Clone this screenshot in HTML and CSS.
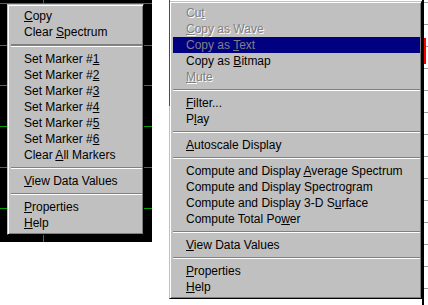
FILE: index.html
```html
<!DOCTYPE html>
<html lang="en">
<head>
    <meta charset="UTF-8">
    <title>Context Menus</title>
    <link rel="stylesheet" href="styles.css">
</head>
<body>
    <div class="scope">
        <ul class="menu menu--left">
            <li class="menu__item"><u>C</u>opy</li>
            <li class="menu__item">Clear <u>S</u>pectrum</li>
            <li class="menu__sep menu__sep--thick"></li>
            <li class="menu__item">Set Marker #<u>1</u></li>
            <li class="menu__item">Set Marker #<u>2</u></li>
            <li class="menu__item">Set Marker #<u>3</u></li>
            <li class="menu__item">Set Marker #<u>4</u></li>
            <li class="menu__item">Set Marker #<u>5</u></li>
            <li class="menu__item">Set Marker #<u>6</u></li>
            <li class="menu__item">Clear <u>A</u>ll Markers</li>
            <li class="menu__sep"></li>
            <li class="menu__item"><u>V</u>iew Data Values</li>
            <li class="menu__sep"></li>
            <li class="menu__item"><u>P</u>roperties</li>
            <li class="menu__item"><u>H</u>elp</li>
        </ul>
    </div>

    <div class="stage">
        <ul class="menu menu--right">
            <li class="menu__item disabled">Cu<u>t</u></li>
            <li class="menu__item disabled"><u>C</u>opy as Wave</li>
            <li class="menu__item disabled active">Copy as <u>T</u>ext</li>
            <li class="menu__item">Copy as <u>B</u>itmap</li>
            <li class="menu__item disabled"><u>M</u>ute</li>
            <li class="menu__sep"></li>
            <li class="menu__item"><u>F</u>ilter...</li>
            <li class="menu__item">P<u>l</u>ay</li>
            <li class="menu__sep"></li>
            <li class="menu__item"><u>A</u>utoscale Display</li>
            <li class="menu__sep"></li>
            <li class="menu__item">Compute and Display <u>A</u>verage Spectrum</li>
            <li class="menu__item">Compute and Display Spectrogram</li>
            <li class="menu__item">Compute and Display 3-D S<u>u</u>rface</li>
            <li class="menu__item">Compute Total Po<u>w</u>er</li>
            <li class="menu__sep"></li>
            <li class="menu__item"><u>V</u>iew Data Values</li>
            <li class="menu__sep"></li>
            <li class="menu__item"><u>P</u>roperties</li>
            <li class="menu__item"><u>H</u>elp</li>
        </ul>
        <div class="trace"></div>
    </div>

    <div class="axis">
        <div class="axis__bar"></div>
    </div>
</body>
</html>
```

FILE: styles.css
```css
body {
    margin: 0;
    width: 428px;
    height: 305px;
    overflow: hidden;
    background: #fff;
    display: flex;
    align-items: flex-start;
    font-family: "Liberation Sans", Arial, sans-serif;
    font-size: 12px;
    color: #000;
}

/* black plot window with green grid behind the first menu */
.scope {
    flex: none;
    width: 152px;
    height: 242px;
    box-sizing: border-box;
    padding: 4px 0 0 7px;
    background:
        linear-gradient(#00a000, #00a000) 43px 0 / 1px 100% no-repeat,
        linear-gradient(#00a000, #00a000) 0 3px / 100% 1px no-repeat,
        linear-gradient(#00a000, #00a000) 0 45px / 100% 1px no-repeat,
        linear-gradient(#00a000, #00a000) 0 85px / 100% 1px no-repeat,
        linear-gradient(#00a000, #00a000) 0 126px / 100% 1px no-repeat,
        linear-gradient(#00a000, #00a000) 0 167px / 100% 1px no-repeat,
        linear-gradient(#00a000, #00a000) 0 208px / 100% 1px no-repeat,
        #000;
}

.stage {
    flex: none;
    position: relative;
    margin-left: 17px;
    padding-top: 1px;
}

.trace {
    position: absolute;
    left: 0;
    top: 0;
    width: 1px;
    height: 106px;
    background: #f00;
}

/* right hand axis of the window behind */
.axis {
    flex: none;
    position: relative;
    width: 4px;
    height: 305px;
    border-left: 2px solid #000;
    background: repeating-linear-gradient(to bottom, #a0a0a0 0 1px, transparent 1px 22px) 0 2px / 4px 100% no-repeat;
}

.axis__bar {
    position: absolute;
    left: 0;
    top: 38px;
    width: 2px;
    height: 26px;
    background: #f00;
}

/* Win9x style popup menu */
.menu {
    list-style: none;
    margin: 0;
    padding: 3px 1px 3px 3px;
    box-sizing: border-box;
    background: #c0c0c0;
    border: 1px solid;
    border-color: #c0c0c0 #000 #000 #c0c0c0;
    box-shadow: inset 1px 1px #fff, inset -1px -1px #808080;
}

.menu--left {
    width: 137px;
}

.menu--right {
    width: 253px;
}

.menu__item {
    height: 16px;
    line-height: 16px;
    padding-left: 13px;
    white-space: nowrap;
}

.menu__item.disabled {
    color: #808080;
    text-shadow: 1px 1px 0 #fff;
}

.menu__item.active {
    background: #000080;
    text-shadow: none;
}

.menu__sep {
    height: 0;
    margin: 4px 0;
    border-top: 1px solid #808080;
    border-bottom: 1px solid #fff;
}

.menu__sep--thick {
    border-top-width: 2px;
}
```
